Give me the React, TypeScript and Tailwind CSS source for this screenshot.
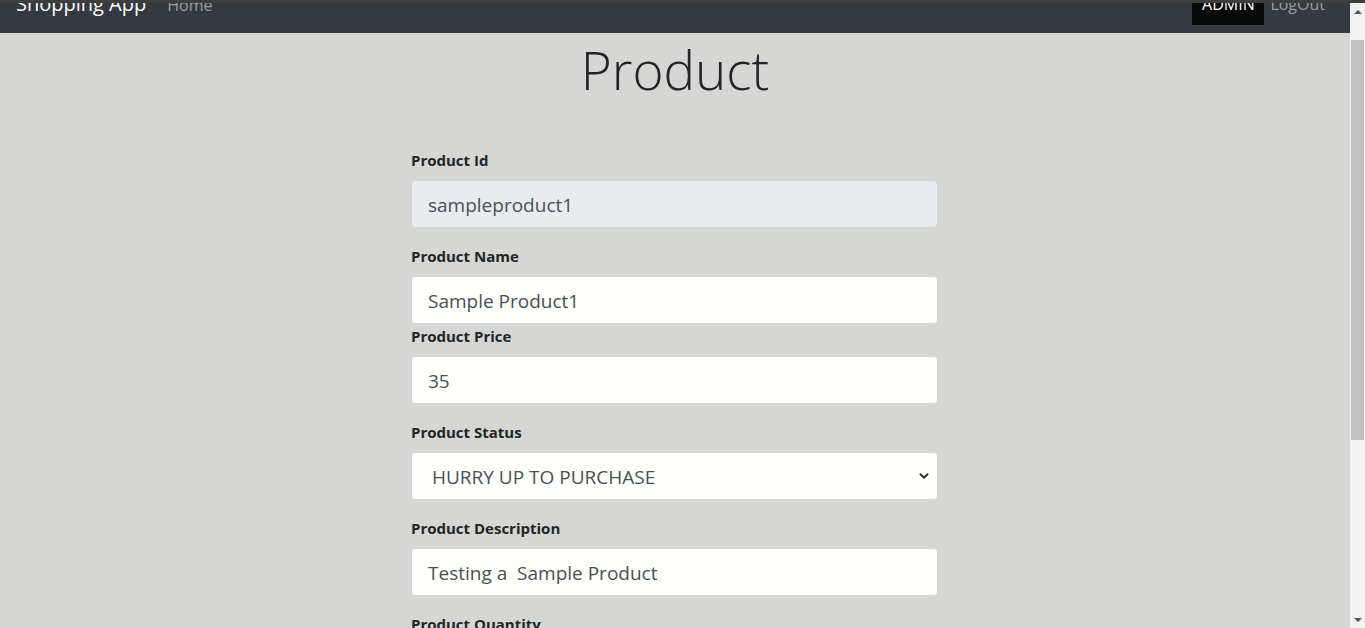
import { ChevronDown } from 'lucide-react'

const font = { fontFamily: '"Open Sans", "Noto Sans", Arial, sans-serif' }

function Field({ label, value, disabled, gap = 'mb-[18px]' }: { label: string; value: string; disabled?: boolean; gap?: string }) {
  return (
    <div className={gap}>
      <label className="block h-[20px] mb-[10px] text-[15px] leading-[20px] font-bold text-[#212529]">{label}</label>
      <div
        className={`h-[48px] rounded-[4px] border border-[#ced4da] px-4 pt-[3px] flex items-center text-[19px] text-[#495057] whitespace-pre ${
          disabled ? 'bg-[#e9ecef]' : 'bg-[#fffffb]'
        }`}
      >
        {value}
      </div>
    </div>
  )
}

export default function App() {
  return (
    <div className="h-[628px] w-[1365px] overflow-hidden flex flex-col bg-[#d6d6d4]" style={font}>
      <div className="h-[3px] bg-[#3e3e3c] shrink-0" />
      <div className="flex flex-1 min-h-0">
        <div className="flex-1 min-w-0 flex flex-col">
          <nav className="h-[30px] bg-[#343a40] overflow-hidden flex items-start shrink-0">
            <div className="flex items-start w-full -mt-[12px]">
              <span className="ml-4 text-[20px] leading-[26px] text-white">Shopping App</span>
              <span className="ml-[21px] mt-[2px] text-[16px] leading-[24px] text-[#9a9da0]">Home</span>
              <div className="ml-auto flex items-start">
                <div className="w-[72px] h-[34px] bg-[#080a0a] text-white text-[16px] leading-[24px] text-center pt-[1px]">ADMIN</div>
                <span className="ml-[6px] mr-[25px] mt-[1px] text-[16px] leading-[24px] text-[#9a9da0]">LogOut</span>
              </div>
            </div>
          </nav>
          <h1 className="text-center text-[53px] leading-[74px] font-light text-[#212529]">Product</h1>
          <div className="w-[527px] ml-[411px] mt-[43px]">
            <Field label="Product Id" value="sampleproduct1" disabled />
            <Field label="Product Name" value="Sample Product1" gap="mb-[2px]" />
            <Field label="Product Price" value="35" />
            <div className="mb-[18px]">
              <label className="block h-[20px] mb-[10px] text-[15px] leading-[20px] font-bold text-[#212529]">Product Status</label>
              <div className="h-[48px] rounded-[4px] border border-[#ced4da] bg-[#fffffb] pl-5 pr-[6px] pt-[3px] flex items-center justify-between text-[19px] text-[#495057]">
                <span>HURRY UP TO PURCHASE</span>
                <ChevronDown size={14} strokeWidth={3.5} className="text-[#333] -mt-[3px]" />
              </div>
            </div>
            <Field label="Product Description" value="Testing a  Sample Product" />
            <label className="block h-[20px] text-[15px] leading-[20px] font-bold text-[#212529]">Product Quantity</label>
          </div>
        </div>
        <div className="w-[15px] bg-[#f1f1f1] flex flex-col items-center shrink-0">
          <div className="h-[17px] flex items-center justify-center">
            <div className="w-0 h-0 border-l-[4px] border-r-[4px] border-b-[4px] border-l-transparent border-r-transparent border-b-[#505050]" />
          </div>
          <div className="w-[13px] h-[400px] bg-[#c1c1c1] mt-[20px]" />
          <div className="flex-1" />
          <div className="h-[17px] flex items-center justify-center">
            <div className="w-0 h-0 border-l-[4px] border-r-[4px] border-t-[4px] border-l-transparent border-r-transparent border-t-[#505050]" />
          </div>
        </div>
      </div>
    </div>
  )
}
